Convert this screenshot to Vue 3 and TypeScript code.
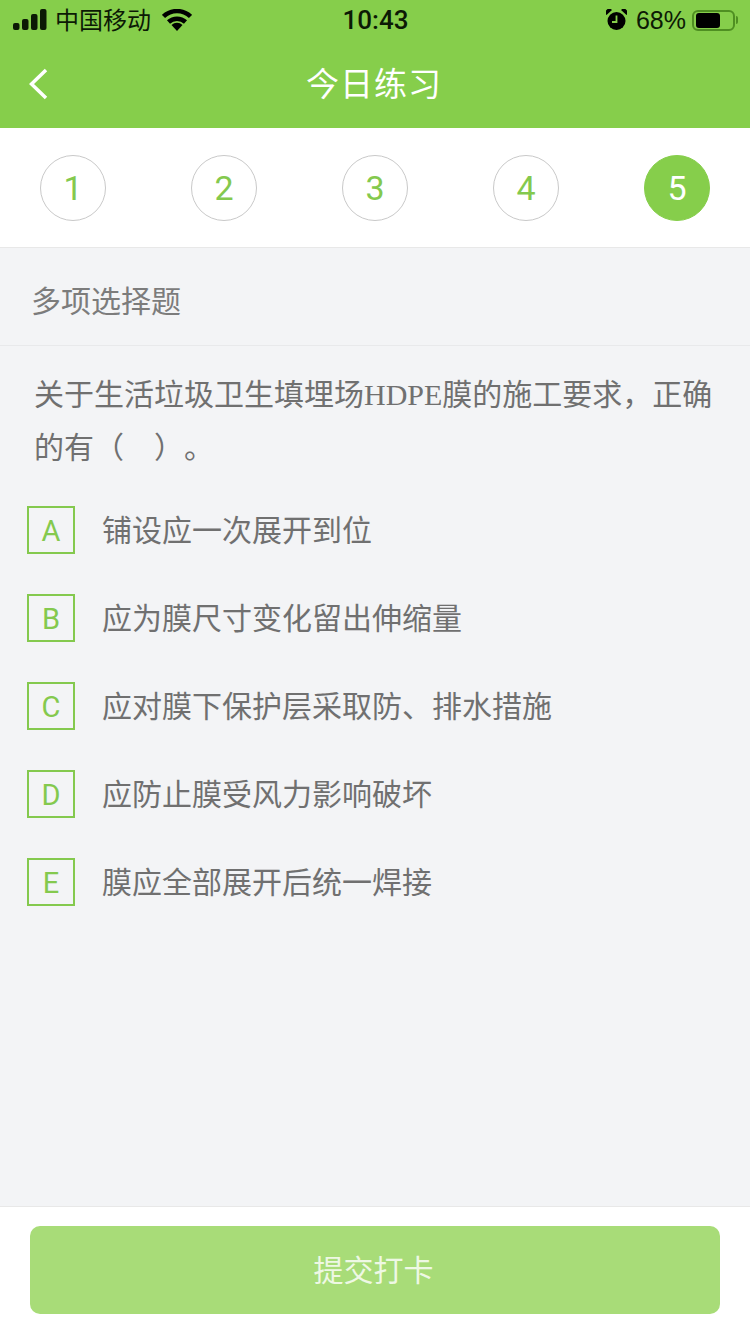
<template>
  <div class="page">
    <header class="top">
      <div class="status">
        <div class="status-left">
          <svg class="signal" width="34" height="22" viewBox="0 0 34 22">
            <rect x="0" y="14" width="6.500" height="7" rx="2" />
            <rect x="9" y="10" width="6.500" height="11" rx="2" />
            <rect x="18" y="5" width="6.500" height="16" rx="2" />
            <rect x="27" y="0" width="6.500" height="21" rx="2" />
          </svg>
          <span class="carrier">中国移动</span>
          <svg class="wifi" width="30" height="22" viewBox="0 0 30 22">
            <path d="M1.500 7.500 A19.500 19.500 0 0 1 28.500 7.500" />
            <path d="M6.500 13 A12.500 12.500 0 0 1 23.500 13" />
            <path class="wedge" d="M15 22 L9.500 16 A8 8 0 0 1 20.500 16 Z" />
          </svg>
        </div>
        <span class="clock">10:43</span>
        <div class="status-right">
          <svg class="alarm" width="21" height="22" viewBox="0 0 21 22">
            <circle cx="10.500" cy="12" r="9" fill="#000" />
            <path d="M10.500 6.500 V13 H6" fill="none" stroke="#86ce4b" stroke-width="1.800" />
            <path d="M0.500 6 L6 1 A3.500 3.500 0 0 0 0.500 6 Z" fill="#000" />
            <path d="M20.500 6 L15 1 A3.500 3.500 0 0 1 20.500 6 Z" fill="#000" />
          </svg>
          <span class="percent">68%</span>
          <div class="battery">
            <div class="battery-fill" :style="{ width: battery + '%' }"></div>
          </div>
          <div class="battery-cap"></div>
        </div>
      </div>
      <div class="nav">
        <svg class="back" width="20" height="32" viewBox="0 0 20 32">
          <path d="M17 2 L2.500 16 L17 30" />
        </svg>
        <h1 class="title">今日练习</h1>
      </div>
    </header>

    <div class="steps">
      <div
        v-for="n in steps"
        :key="n"
        class="step"
        :class="{ active: n === current }"
      >
        {{ n }}
      </div>
    </div>

    <div class="kind">多项选择题</div>

    <main class="body">
      <p class="question">
        关于生活垃圾卫生填埋场<span class="latin">HDPE</span>膜的施工要求，正确的有（　）。
      </p>
      <div v-for="opt in options" :key="opt.key" class="option">
        <span class="letter">{{ opt.key }}</span>
        <span class="text">{{ opt.text }}</span>
      </div>
    </main>

    <footer class="bottom">
      <button class="submit" type="button">提交打卡</button>
    </footer>
  </div>
</template>

<script setup lang="ts">
interface Option {
  key: string
  text: string
}

const battery = 68
const current = 5
const steps = [1, 2, 3, 4, 5]

const options: Option[] = [
  { key: 'A', text: '铺设应一次展开到位' },
  { key: 'B', text: '应为膜尺寸变化留出伸缩量' },
  { key: 'C', text: '应对膜下保护层采取防、排水措施' },
  { key: 'D', text: '应防止膜受风力影响破坏' },
  { key: 'E', text: '膜应全部展开后统一焊接' }
]
</script>

<style scoped>
.page {
  display: flex;
  flex-direction: column;
  height: 1334px;
  background: #f3f4f6;
  font-family: "Liberation Sans", "Noto Sans CJK SC", sans-serif;
  overflow: hidden;
}

.top {
  height: 128px;
  background: #86ce4b;
}

.status {
  display: grid;
  grid-template-columns: 1fr auto 1fr;
  align-items: center;
  height: 40px;
  padding: 0 12px 0 13px;
  color: #0c1a05;
}

.status-left {
  display: flex;
  align-items: center;
}

.signal {
  fill: #0c1a05;
  margin-right: 8px;
}

.carrier {
  font-size: 24px;
  margin: 0 11px 4px 0;
}

.wifi path {
  fill: none;
  stroke: #000;
  stroke-width: 4.500;
}

.wifi .wedge {
  fill: #000;
  stroke: none;
}

.clock {
  font-family: Roboto, "Liberation Sans", sans-serif;
  font-size: 26px;
  font-weight: 500;
}

.status-right {
  display: flex;
  align-items: center;
  justify-content: flex-end;
}

.percent {
  font-size: 25px;
  margin: 0 6px 0 9px;
}

.battery {
  width: 43px;
  height: 21px;
  padding: 1px 2px;
  border: 2px solid #4f8f22;
  border-radius: 6px;
  box-sizing: border-box;
}

.battery-fill {
  height: 100%;
  background: #000;
  border-radius: 3px;
}

.battery-cap {
  width: 2px;
  height: 8px;
  margin-left: 1px;
  background: #4f8f22;
  border-radius: 0 2px 2px 0;
}

.nav {
  position: relative;
  display: flex;
  align-items: center;
  justify-content: center;
  height: 88px;
  padding-bottom: 4px;
  box-sizing: border-box;
}

.back {
  position: absolute;
  left: 29px;
  top: 28px;
  fill: none;
  stroke: #fff;
  stroke-width: 3.500;
}

.title {
  margin: 0 2px 0 0;
  color: #fff;
  font-size: 33px;
  font-weight: 400;
  letter-spacing: 1px;
}

.steps {
  display: flex;
  justify-content: space-between;
  height: 120px;
  padding: 27px 40px 0;
  background: #fff;
  border-bottom: 1px solid #e8e8e8;
  box-sizing: border-box;
}

.step {
  display: flex;
  align-items: center;
  justify-content: center;
  width: 66px;
  height: 66px;
  border: 1px solid #c9c9c9;
  border-radius: 50%;
  box-sizing: border-box;
  color: #84c94e;
  font-family: Roboto, "Liberation Sans", sans-serif;
  font-size: 34px;
}

.step.active {
  background: #86ce4b;
  border-color: #86ce4b;
  color: #fff;
}

.kind {
  height: 98px;
  padding-left: 31px;
  border-bottom: 1px solid #e8e9eb;
  box-sizing: border-box;
  color: #7c7c7c;
  font-size: 30px;
  line-height: 108px;
}

.body {
  flex: 1;
  padding: 0 27px;
}

.question {
  margin: 22px 0 12px 7px;
  color: #707070;
  font-size: 30px;
  line-height: 53px;
  text-spacing-trim: space-all;
}

.latin {
  font-family: "Liberation Serif", serif;
}

.option {
  display: flex;
  align-items: center;
  height: 88px;
}

.letter {
  display: flex;
  align-items: center;
  justify-content: center;
  width: 48px;
  height: 48px;
  margin-right: 27px;
  padding-top: 2px;
  border: 2px solid #84c94e;
  box-sizing: border-box;
  color: #84c94e;
  font-family: Roboto, "Liberation Sans", sans-serif;
  font-size: 29px;
}

.text {
  padding-bottom: 4px;
  color: #707070;
  font-size: 30px;
}

.bottom {
  height: 128px;
  padding: 19px 30px 0;
  background: #fff;
  border-top: 1px solid #e8e8e8;
  box-sizing: border-box;
}

.submit {
  display: block;
  width: 100%;
  height: 88px;
  padding: 0 3px 4px 0;
  background: #a8dc78;
  border: none;
  border-radius: 10px;
  color: #eef8e4;
  font-family: inherit;
  font-size: 30px;
}
</style>
